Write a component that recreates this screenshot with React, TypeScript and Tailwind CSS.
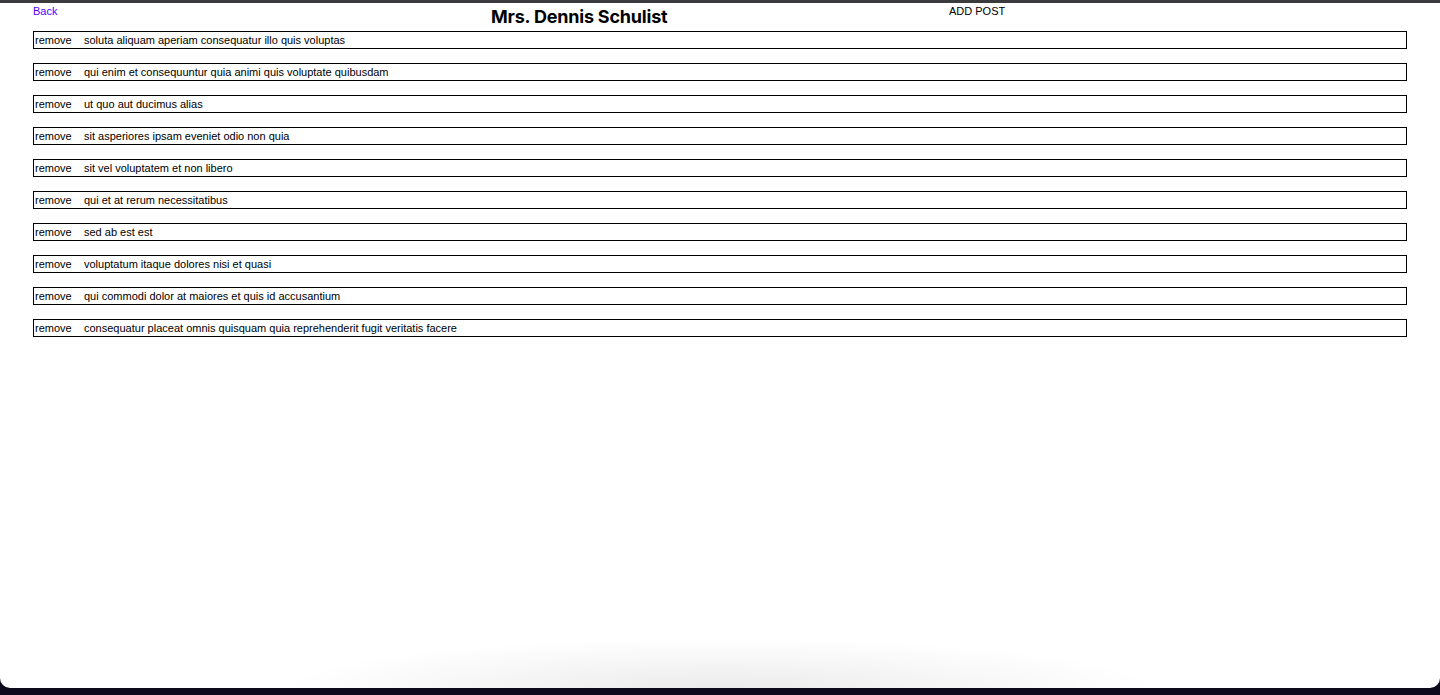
const posts = [
  "soluta aliquam aperiam consequatur illo quis voluptas",
  "qui enim et consequuntur quia animi quis voluptate quibusdam",
  "ut quo aut ducimus alias",
  "sit asperiores ipsam eveniet odio non quia",
  "sit vel voluptatem et non libero",
  "qui et at rerum necessitatibus",
  "sed ab est est",
  "voluptatum itaque dolores nisi et quasi",
  "qui commodi dolor at maiores et quis id accusantium",
  "consequatur placeat omnis quisquam quia reprehenderit fugit veritatis facere",
];

export default function App() {
  return (
    <div className="h-[695px] w-[1440px] overflow-hidden bg-[#0d0a1c] flex flex-col font-['Liberation_Sans',Arial,sans-serif] text-black">
      <div className="h-[3px] bg-[#3b3b3d]" />
      <main className="relative flex-1 bg-white rounded-b-[10px] overflow-hidden">
        <header className="grid grid-cols-3 items-start px-[33px] h-[28px]">
          <div className="pt-[1px] text-[11px] leading-[14px]">
            <a href="#" className="text-[#5200ff]">
              Back
            </a>
          </div>
          <h1 className="pt-[3px] text-[18px] leading-[22px] font-bold tracking-[-0.2px] font-['Inter','Liberation_Sans',sans-serif]">
            Mrs. Dennis Schulist
          </h1>
          <div className="pt-[1px] text-[11px] leading-[14px]">
            <button>ADD POST</button>
          </div>
        </header>

        <ul className="flex flex-col gap-[14px] px-[33px]">
          {posts.map((title, i) => (
            <li
              key={i}
              className="flex items-center h-[18px] border border-black pl-px text-[11px] leading-[16px]"
            >
              <button className="w-[49px] text-left">remove</button>
              <span>{title}</span>
            </li>
          ))}
        </ul>

        <div className="absolute bottom-0 left-[280px] w-[880px] h-[50px] bg-[radial-gradient(ellipse_at_bottom,rgba(0,0,0,0.08),rgba(0,0,0,0)_70%)]" />
      </main>
      <div className="h-[7px]" />
    </div>
  );
}
